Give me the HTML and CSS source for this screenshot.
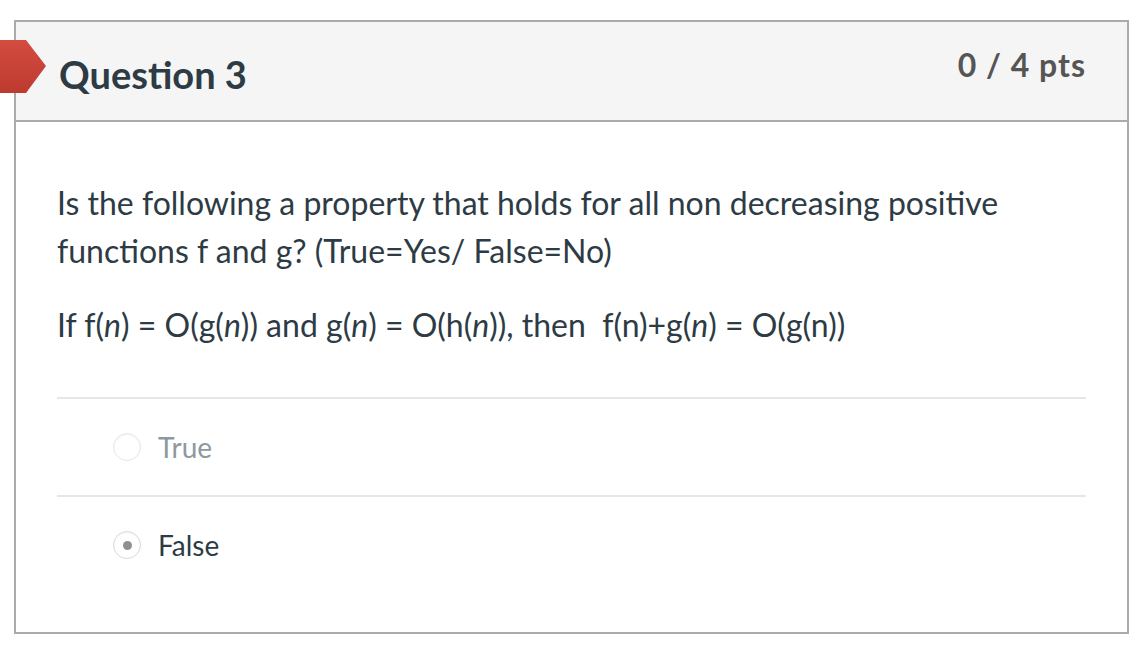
FILE: index.html
```html
<!DOCTYPE html>
<html>
<head>
<meta charset="utf-8">
<link rel="stylesheet" href="styles.css">
</head>
<body>
<div class="page">
  <div class="flag"></div>
  <div class="card">
    <div class="card-header">
      <h2 class="title">Question 3</h2>
      <div class="pts">0 / 4 pts</div>
    </div>
    <div class="card-body">
      <div class="question">
        <p class="para">Is the following a property that holds for all non decreasing positive functions f and g? (True=Yes/ False=No)</p>
        <p class="para">If f(<i>n</i>) = O(g(<i>n</i>)) and g(<i>n</i>) = O(h(<i>n</i>)), then&nbsp; f(n)+g(<i>n</i>) = O(g(n))</p>
      </div>
      <div class="answers">
        <div class="answer faded">
          <span class="radio"></span>
          <span class="label">True</span>
        </div>
        <div class="answer">
          <span class="radio checked"></span>
          <span class="label">False</span>
        </div>
      </div>
    </div>
  </div>
</div>
</body>
</html>
```

FILE: styles.css
```css
html, body {
  margin: 0;
  padding: 0;
  background: #ffffff;
}
body {
  font-family: Lato, "Open Sans", sans-serif;
  color: #2d3b45;
}
.page {
  position: relative;
  padding: 20px 0 0 14px;
}
.flag {
  position: absolute;
  left: 0;
  top: 40px;
  width: 46px;
  height: 53px;
  background: linear-gradient(#d44c40, #bd3a2f);
  clip-path: polygon(0 0, 26px 0, 46px 26px, 26px 53px, 0 53px);
}
.card {
  width: 1111px;
  height: 610px;
  border: 2px solid #ababab;
  display: flex;
  flex-direction: column;
}
.card-header {
  height: 98px;
  background: #f5f5f5;
  border-bottom: 2px solid #ababab;
  display: flex;
  justify-content: space-between;
  align-items: flex-start;
  padding: 0 41px 0 43px;
}
.title {
  margin: 0;
  padding-top: 30px;
  font-size: 38px;
  font-weight: 700;
  line-height: 45px;
  color: #2d3b45;
}
.pts {
  padding-top: 23px;
  font-size: 32px;
  font-weight: 700;
  line-height: 40px;
  letter-spacing: 1px;
  color: #555555;
}
.card-body {
  padding: 0 41px;
}
.question {
  padding-top: 57px;
  padding-bottom: 48px;
  border-bottom: 2px solid #e6e6e6;
}
.para {
  margin: 0 0 26px;
  font-size: 32px;
  line-height: 48px;
}
.para:last-child {
  margin-bottom: 0;
}
.answer {
  display: flex;
  align-items: center;
  height: 96px;
  padding-left: 56px;
  border-bottom: 2px solid #e6e6e6;
}
.answer:last-child {
  border-bottom: none;
}
.radio {
  width: 26px;
  height: 26px;
  border-radius: 50%;
  border: 1px solid #dadada;
  box-shadow: inset 0 1px 2px rgba(0,0,0,0.06);
  display: flex;
  align-items: center;
  justify-content: center;
  margin-right: 17px;
}
.radio.checked::after {
  content: "";
  width: 9px;
  height: 9px;
  border-radius: 50%;
  background: #8f8f8f;
}
.label {
  font-size: 28px;
}
.faded .label {
  color: #8e999f;
}
.faded .radio {
  border-color: #e6e6e6;
}
```
